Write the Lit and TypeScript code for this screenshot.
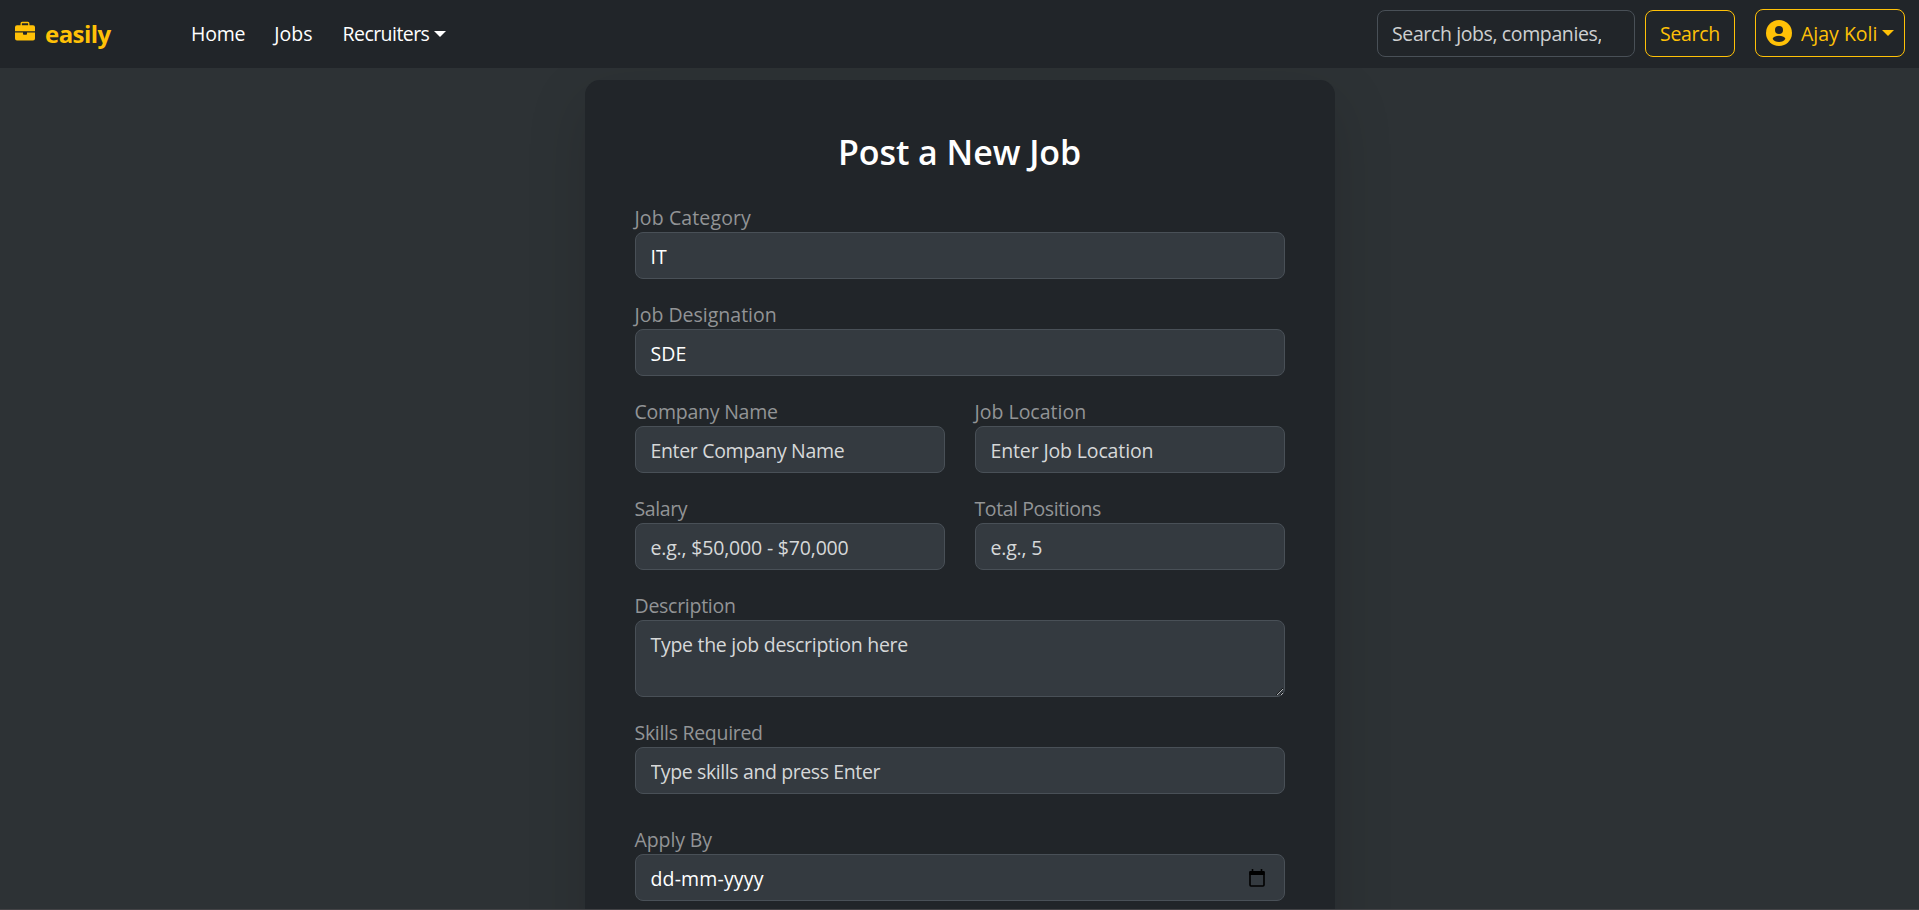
import { LitElement, html, css } from "lit";
import { customElement, property } from "lit/decorators.js";

const tracking = (n: number) => `letter-spacing:${n}px`;

@customElement("nav-bar")
export class NavBar extends LitElement {
  static styles = css`
    :host {
      display: flex;
      align-items: center;
      box-sizing: border-box;
      height: 68px;
      padding: 0 14px 2px 15px;
      background: #212529;
      color: #fff;
    }
    .brand {
      display: flex;
      align-items: center;
      width: 176px;
      color: #ffc107;
      font-size: 24px;
      font-weight: 700;
      letter-spacing: -0.55px;
      gap: 10px;
    }
    .brand svg { margin-top: -4px; }
    .links { display: flex; gap: 29px; flex: 1; padding-top: 2px; }
    .link { display: flex; align-items: center; line-height: 30px; white-space: nowrap; }
    .link:first-child { letter-spacing: -0.2px; }
    .link:last-child { margin-left: 1px; }
    .caret {
      width: 0;
      height: 0;
      margin-left: 5px;
      border-top: 6px solid currentColor;
      border-left: 6px solid transparent;
      border-right: 6px solid transparent;
    }
    .search {
      box-sizing: border-box;
      width: 258px;
      height: 47px;
      padding: 1px 33px 0 14px;
      border: 1px solid #495057;
      border-radius: 8px;
      background: #212529;
      color: #fff;
      font: inherit;
      letter-spacing: -0.38px;
      outline: none;
    }
    .search::placeholder { color: #ced0d1; opacity: 1; }
    .button {
      display: flex;
      align-items: center;
      box-sizing: border-box;
      height: 47px;
      border: 1px solid #ffc107;
      border-radius: 8px;
      background: none;
      color: #ffc107;
      font: inherit;
      white-space: nowrap;
    }
    .go { width: 90px; margin-left: 10px; padding: 0; justify-content: center; letter-spacing: -0.3px; }
    .user { width: 150px; height: 48px; margin-left: 20px; margin-top: -1px; padding: 0 0 0 10px; }
    .user svg { margin-right: 9px; flex: none; }
    .user span { padding-top: 1px; }
  `;
  render() {
    return html`
      <div class="brand">
        <svg width="20" height="20" viewBox="0 0 20 20" fill="#ffc107">
          <path d="M6.2 5V2.4Q6.2 1.5 7.1 1.5h5.800Q13.800 1.500 13.800 2.400V5" fill="none" stroke="#ffc107" stroke-width="1.300"/>
          <path d="M2 4.300h16a2 2 0 0 1 2 2V10.300H0V6.300a2 2 0 0 1 2-2z"/>
          <path d="M0 11.400h8v1.600q0 .8.8.8h2.400q.8 0 .8-.8v-1.600h8V17.500a2 2 0 0 1-2 2H2a2 2 0 0 1-2-2z"/>
        </svg>
        <span>easily</span>
      </div>
      <div class="links">
        <span class="link">Home</span>
        <span class="link">Jobs</span>
        <span class="link"><span style=${tracking(-0.55)}>Recruiters</span><i class="caret"></i></span>
      </div>
      <input class="search" placeholder="Search jobs, companies, skills" />
      <button class="button go">Search</button>
      <button class="button user">
        <svg width="26" height="26" viewBox="0 0 26 26">
          <circle cx="13" cy="13" r="13" fill="#ffc107"/>
          <circle cx="13" cy="10" r="4" fill="#212529"/>
          <path d="M6.600 18.700C7.600 16.700 10.200 15.800 13 15.800s5.400.9 6.400 2.900C18.200 20.800 15.800 22 13 22s-5.200-1.200-6.400-3.300z" fill="#212529"/>
        </svg>
        <span>Ajay Koli</span><i class="caret"></i>
      </button>
    `;
  }
}

@customElement("form-field")
export class FormField extends LitElement {
  @property() label = "";
  @property() kind = "text";
  @property() value = "";
  @property() placeholder = "";
  @property({ type: Number }) labelTracking = 0;
  @property({ type: Number }) textTracking = 0;

  static styles = css`
    :host { display: block; min-width: 0; }
    .label {
      display: block;
      box-sizing: border-box;
      height: 30px;
      padding-top: 1px;
      line-height: 30px;
      color: #929496;
      white-space: nowrap;
    }
    .control {
      display: block;
      box-sizing: border-box;
      width: 100%;
      height: 47px;
      margin: 0;
      padding: 8px 15px 7px;
      border: 1px solid #495057;
      border-radius: 8px;
      background: #343a40;
      color: #fff;
      font: inherit;
      line-height: 30px;
      outline: none;
    }
    .control::placeholder { color: #d6d8d9; opacity: 1; }
    .area { height: 77px; padding-top: 9px; resize: vertical; overflow: hidden; }
    .date { display: flex; align-items: center; justify-content: space-between; padding-top: 9px; padding-bottom: 6px; }
    .date svg { margin: -2px 4px 0 0; }
  `;
  private control() {
    const spacing = tracking(this.textTracking);
    if (this.kind === "area")
      return html`<textarea class="control area" style=${spacing} placeholder=${this.placeholder}></textarea>`;
    if (this.kind === "date")
      return html`<div class="control date">
        <span style=${spacing}>${this.value}</span>
        <svg width="16" height="18" viewBox="0 0 16 18">
          <path d="M1 3.500h14V16q0 1-1 1H2q-1 0-1-1z" fill="none" stroke="#000" stroke-width="1.600"/>
          <path d="M.5 2h15v4H.5zM2.700 0h1.600v3H2.700zM11.700 0h1.600v3h-1.600z" fill="#000"/>
        </svg>
      </div>`;
    return html`<input class="control" style=${spacing} .value=${this.value} placeholder=${this.placeholder} />`;
  }
  render() {
    return html`<label class="label" style=${tracking(this.labelTracking)}>${this.label}</label>${this.control()}`;
  }
}

interface Field {
  label: string;
  lt: number;
  tt: number;
  value?: string;
  placeholder?: string;
  kind?: string;
}

const rows: Field[][] = [
  [{ label: "Job Category", lt: 0.12, tt: 0, value: "IT" }],
  [{ label: "Job Designation", lt: 0, tt: 0.1, value: "SDE" }],
  [
    { label: "Company Name", lt: -0.25, tt: -0.34, placeholder: "Enter Company Name" },
    { label: "Job Location", lt: 0, tt: -0.14, placeholder: "Enter Job Location" },
  ],
  [
    { label: "Salary", lt: -0.4, tt: -0.18, placeholder: "e.g., $50,000 - $70,000" },
    { label: "Total Positions", lt: -0.42, tt: -0.2, placeholder: "e.g., 5" },
  ],
  [{ label: "Description", lt: -0.27, tt: -0.29, placeholder: "Type the job description here", kind: "area" }],
  [{ label: "Skills Required", lt: -0.3, tt: -0.39, placeholder: "Type skills and press Enter" }],
  [{ label: "Apply By", lt: -0.1, tt: 0.15, value: "dd-mm-yyyy", kind: "date" }],
];

@customElement("app-root")
export class AppRoot extends LitElement {
  static styles = css`
    :host {
      display: flex;
      flex-direction: column;
      box-sizing: border-box;
      height: 910px;
      overflow: hidden;
      border-bottom: 1px solid #434346;
      background: #2d3235;
      font: 19.5px "Open Sans", "Noto Sans", sans-serif;
    }
    nav-bar { flex: none; }
    .page { flex: 1; min-height: 0; overflow: hidden; padding-top: 12px; }
    .card {
      box-sizing: border-box;
      width: 750px;
      height: 1000px;
      margin: 0 auto;
      padding: 51px 50px 50px;
      border-radius: 15px;
      background: #212529;
      box-shadow: 0 20px 60px rgba(0, 0, 0, 0.15);
    }
    .title {
      margin: 0 0 29px;
      color: #fff;
      font-size: 34px;
      font-weight: 600;
      line-height: 42px;
      letter-spacing: -0.05px;
      text-align: center;
    }
    .fields { display: flex; flex-direction: column; gap: 20px; }
    .row { display: grid; grid-auto-flow: column; grid-auto-columns: 1fr; gap: 30px; }
    .row:last-child { margin-top: 10px; }
  `;
  render() {
    return html`
      <nav-bar></nav-bar>
      <main class="page">
        <section class="card">
          <h2 class="title">Post a New Job</h2>
          <div class="fields">
            ${rows.map(row => html`<div class="row">
              ${row.map(f => html`<form-field
                .label=${f.label}
                .labelTracking=${f.lt}
                .textTracking=${f.tt}
                .value=${f.value ?? ""}
                .placeholder=${f.placeholder ?? ""}
                .kind=${f.kind ?? "text"}
              ></form-field>`)}
            </div>`)}
          </div>
        </section>
      </main>
    `;
  }
}
